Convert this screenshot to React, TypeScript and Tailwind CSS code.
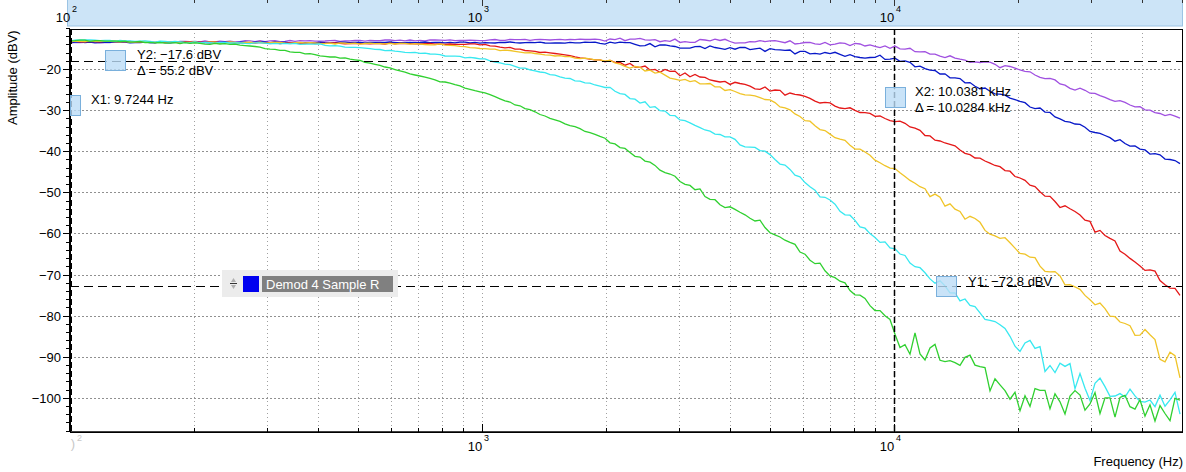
import React from "react";

const X0 = 70, X1 = 1182, Y0 = 29, Y1 = 432, DEC = 412;
const fx = (f: number) => X0 + (Math.log10(f) - 2) * DEC;
const vy = (v: number) => 69 + (-20 - v) * 4.11;
const px = (n: number) => Math.round(n) + 0.5;

function rng(seed: number) {
  let s = seed;
  return () => { s = (s * 16807) % 2147483647; return s / 2147483647; };
}

type K = [number, number][];
const curves: { c: string; k: K; seed: number; floor?: number }[] = [
  { c: "#a050e0", seed: 3, k: [[100, -13.5], [2000, -12.8], [5000, -13.4], [10000, -14.6], [20000, -20], [30000, -26], [50000, -32]] },
  { c: "#0818c8", seed: 5, k: [[100, -13.5], [2000, -13.6], [5000, -15.5], [10000, -17.3], [20000, -27.5], [30000, -35], [50000, -43]] },
  { c: "#e41818", seed: 7, k: [[100, -13.3], [1000, -14], [2000, -18], [5000, -25], [10000, -32.5], [20000, -46], [30000, -58], [50000, -75]] },
  { c: "#f0c428", seed: 11, k: [[100, -13.2], [800, -14], [2000, -18], [5000, -27.5], [10000, -44.5], [20000, -64], [30000, -76], [45000, -89], [50000, -93]] },
  { c: "#38e8f0", seed: 13, floor: -101, k: [[100, -13], [400, -14], [1000, -17.5], [2000, -24.5], [5000, -41], [10000, -64], [13000, -72.5], [20000, -86], [30000, -98], [50000, -101]] },
  { c: "#30d030", seed: 17, floor: -103, k: [[100, -13], [250, -14], [500, -17.8], [1000, -25.6], [2000, -37], [5000, -59], [8000, -74], [9800, -81], [10200, -86], [14000, -90], [20000, -100], [50000, -103]] },
];

function interp(k: K, f: number) {
  const l = Math.log10(f);
  for (let i = 0; i < k.length - 1; i++) {
    const a = Math.log10(k[i][0]), b = Math.log10(k[i + 1][0]);
    if (l >= a && l <= b) return k[i][1] + ((l - a) / (b - a)) * (k[i + 1][1] - k[i][1]);
  }
  return k[k.length - 1][1];
}

function path(k: K, seed: number, floor?: number) {
  const r = rng(seed);
  const pts: string[] = [];
  for (let x = X0; x <= X1; x += 5) {
    const f = Math.pow(10, 2 + (x - X0) / DEC);
    let v = interp(k, f);
    const amp = v < -85 ? 3.2 : v < -50 ? 0.9 : x > 600 ? 0.5 : 0.15;
    v += (r() - 0.5) * 2 * amp;
    if (floor !== undefined && v < floor - 4) v = floor - 4;
    pts.push(`${x},${vy(v).toFixed(1)}`);
  }
  return "M" + pts.join(" L");
}

export default function App() {
  const minorX: number[] = [];
  for (let d = 100; d < 100000; d *= 10)
    for (let m = 2; m <= 9; m++) { const x = fx(d * m); if (x < X1) minorX.push(x); }
  const majorX = [fx(1000), fx(10000)];
  const yMajor = [-20, -30, -40, -50, -60, -70, -80, -90, -100];
  const yMinor: number[] = [];
  for (let v = -10; v >= -108; v -= 2) yMinor.push(v);
  const font = { fontFamily: "Liberation Sans, Arial, sans-serif" };
  return (
    <div className="w-[1186px] h-[472px] bg-white overflow-hidden" style={font}>
      <svg width="1186" height="472" className="block">
        <rect x="67.5" y="-1" width="1115" height="27" fill="#cce4f7" stroke="#9cc4e4" />
        {[...minorX, ...majorX].map((x, i) => (
          <line key={"t" + i} x1={px(x)} x2={px(x)} y1={0} y2={i >= minorX.length ? 6 : 3} stroke="#333" />
        ))}
        {[["2", 70], ["3", 482], ["4", 894]].map(([e, x]) => (
          <g key={"tl" + e}>
            <text x={(x as number) - 7} y={22} fontSize="13" textAnchor="middle" fill="#000">10</text>
            <text x={(x as number) + 2} y={12} fontSize="9" fill="#000">{e}</text>
          </g>
        ))}
        {minorX.concat(majorX).map((x, i) => (
          <line key={"g" + i} x1={px(x)} x2={px(x)} y1={Y0} y2={Y1} stroke="#a0a0a0" strokeDasharray="1 3" />
        ))}
        {yMajor.map((v) => (
          <line key={"h" + v} x1={X0} x2={X1} y1={px(vy(v))} y2={px(vy(v))} stroke="#909090" strokeDasharray="2 2" />
        ))}
        {curves.map((c) => (
          <path key={c.c} d={path(c.k, c.seed, c.floor)} fill="none" stroke={c.c} strokeWidth="1.3" />
        ))}
        <line x1={X0} x2={X1} y1={61.5} y2={61.5} stroke="#000" strokeDasharray="9 5" />
        <line x1={X0} x2={X1} y1={286.5} y2={286.5} stroke="#000" strokeDasharray="9 5" />
        <line x1={894.5} x2={894.5} y1={Y0} y2={Y1} stroke="#000" strokeDasharray="6 3" strokeWidth="1.5" />
        <line x1={71.5} x2={71.5} y1={Y0} y2={Y1} stroke="#000" strokeDasharray="6 3" />
        <rect x={X0 + 0.5} y={Y0 + 0.5} width={X1 - X0} height={Y1 - Y0} fill="none" stroke="#000" />
        <line x1={X0} x2={X0} y1={Y0} y2={Y1} stroke="#000" strokeWidth="2" />
        <line x1={X0} x2={X1} y1={Y1} y2={Y1} stroke="#000" strokeWidth="1.5" />
        {yMinor.map((v) => (
          <line key={"ym" + v} x1={X0 - 4} x2={X0} y1={px(vy(v))} y2={px(vy(v))} stroke="#000" />
        ))}
        {yMajor.map((v) => (
          <g key={"yl" + v}>
            <line x1={X0 - 7} x2={X0} y1={px(vy(v))} y2={px(vy(v))} stroke="#000" />
            <text x={X0 - 9} y={vy(v) + 5} fontSize="13" textAnchor="end" fill="#000">{"\u2212" + Math.abs(v)}</text>
          </g>
        ))}
        {minorX.concat(majorX).map((x, i) => (
          <line key={"bt" + i} x1={px(x)} x2={px(x)} y1={Y1} y2={Y1 - (i >= minorX.length ? 8 : 4)} stroke="#000" />
        ))}
        <text transform="translate(17 125) rotate(-90)" fontSize="13" fill="#000">Amplitude (dBV)</text>
        <text x={73} y={448} fontSize="13" fill="#c8c8c8" textAnchor="middle">)</text>
        <text x={77} y={441} fontSize="9" fill="#c8c8c8">2</text>
        {[["3", 482], ["4", 894]].map(([e, x]) => (
          <g key={"bl" + e}>
            <text x={(x as number) - 7} y={451} fontSize="13" textAnchor="middle" fill="#000">10</text>
            <text x={(x as number) + 2} y={441} fontSize="9" fill="#000">{e}</text>
          </g>
        ))}
        <text x={1183} y={466} fontSize="13" textAnchor="end" fill="#000">Frequency (Hz)</text>
        {[[105, 50], [70, 95], [885, 87], [936, 276]].map(([x, y], i) => (
          <rect key={"cb" + i} x={x + 0.5} y={y + 0.5} width={i === 1 ? 10 : 20} height={20} fill="#bcdcf6" fillOpacity="0.8" stroke="#7ab0dc" />
        ))}
        <text x={137} y={59} fontSize="13" fill="#000">Y2: −17.6 dBV</text>
        <text x={137} y={75} fontSize="13" fill="#000">Δ = 55.2 dBV</text>
        <text x={91} y={104} fontSize="13" fill="#000">X1: 9.7244 Hz</text>
        <text x={915} y={96} fontSize="13" fill="#000">X2: 10.0381 kHz</text>
        <text x={915} y={112} fontSize="13" fill="#000">Δ = 10.0284 kHz</text>
        <text x={968} y={286} fontSize="13" fill="#000">Y1: −72.8 dBV</text>
        <rect x={222} y={270} width={176} height={27} fill="#ececec" />
        <path d="M231 282 l2.5 -4 l2.5 4 z M231 285 l2.5 4 l2.5 -4 z" fill="#b0b0b0" />
        <line x1={230} x2={237} y1={283.5} y2={283.5} stroke="#333" />
        <rect x={243} y={276} width={16} height={16} fill="#0000f0" />
        <rect x={262} y={276} width={131} height={16} fill="#808080" />
        <text x={266} y={289} fontSize="13" fill="#fff">Demod 4 Sample R</text>
      </svg>
    </div>
  );
}
